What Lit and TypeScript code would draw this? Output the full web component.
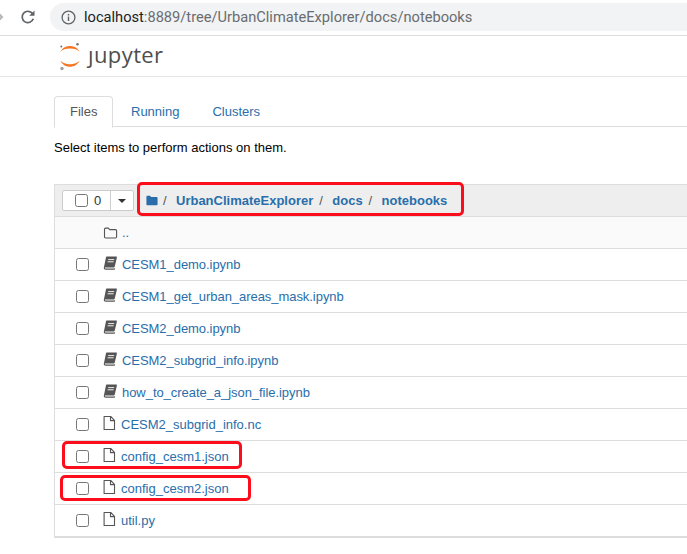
import { LitElement, css, html, svg } from "lit";
import { customElement } from "lit/decorators.js";
import { classMap } from "lit/directives/class-map.js";

type Item = { name: string; kind: "notebook" | "file" };

const ITEMS: Item[] = [
  { name: "CESM1_demo.ipynb", kind: "notebook" },
  { name: "CESM1_get_urban_areas_mask.ipynb", kind: "notebook" },
  { name: "CESM2_demo.ipynb", kind: "notebook" },
  { name: "CESM2_subgrid_info.ipynb", kind: "notebook" },
  { name: "how_to_create_a_json_file.ipynb", kind: "notebook" },
  { name: "CESM2_subgrid_info.nc", kind: "file" },
  { name: "config_cesm1.json", kind: "file" },
  { name: "config_cesm2.json", kind: "file" },
  { name: "util.py", kind: "file" }
];

const bookIcon = svg`<svg class="icon" width="14" height="16" viewBox="0 0 14 16">
  <path fill="#555" d="M3.6 1.6h9.6c.5 0 .8.4.7.9l-2.2 9.2c-.1.5-.5.8-1 .8H2.4c-.5 0-.7.5-.4.8.2.2.5.3.9.3h8.4l.9-.6-.3 1.2c-.1.4-.4.6-.8.6H2.7C1.500 14.800.6 13.900.8 12.800l.3-1.400L3 2.300c.1-.4.300-.7.600-.7z"/>
  <path stroke="#fff" stroke-width=".9" d="M5.200 4.600h6M4.600 6.800h6"/>
</svg>`;

const fileIcon = svg`<svg class="icon" width="14" height="16" viewBox="0 0 14 16">
  <path fill="none" stroke="#555" stroke-width="1.100" stroke-linejoin="round" d="M1.100 1.500h6.600l3.800 3.900v9.100H1.100zM7.500 1.700v3.900h3.900"/>
</svg>`;

const folderOpenIcon = svg`<svg class="icon" width="15" height="14" viewBox="0 0 15 14">
  <path fill="none" stroke="#555" stroke-width="1.100" stroke-linejoin="round" d="M1.500 3.300c0-.7.500-1.200 1.200-1.200h2.700l1.300 1.500h5.800c.7 0 1.100.5 1.100 1.200v6c0 .7-.4 1.200-1.100 1.200H2.700c-.7 0-1.200-.5-1.200-1.200z"/>
</svg>`;

@customElement("app-root")
export class AppRoot extends LitElement {
  static styles = css`
    :host {
      display: block;
      position: relative;
      width: 687px;
      height: 554px;
      overflow: hidden;
      background: #fff;
      font-family: "Liberation Sans", Arial, sans-serif;
      font-size: 13px;
      color: #000;
    }

    a {
      color: #296eaa;
      text-decoration: none;
    }

    .browser {
      display: flex;
      align-items: center;
      height: 36px;
      box-sizing: border-box;
      border-bottom: 1px solid #dcdcdc;
      padding-bottom: 1px;
    }

    .back {
      width: 4px;
      height: 12px;
      flex: none;
    }

    .reload {
      margin-left: 16px;
      flex: none;
    }

    .address {
      display: flex;
      align-items: center;
      flex: 1;
      height: 28px;
      margin-left: 14px;
      padding-left: 11px;
      border-radius: 14px 0 0 14px;
      background: #f1f3f4;
      font-family: Roboto, "Liberation Sans", sans-serif;
      font-size: 14.65px;
      color: #6a6c6f;
    }

    .address svg {
      flex: none;
      margin-right: 8px;
    }

    .address b {
      font-weight: 400;
      color: #202124;
    }

    .brand {
      display: flex;
      align-items: center;
      height: 41px;
      padding-left: 59px;
      box-sizing: border-box;
      border-bottom: 1px solid #e7e7e7;
    }

    .wordmark {
      margin-left: 7px;
      margin-top: -4px;
      font-family: "Open Sans", sans-serif;
      font-size: 22px;
      letter-spacing: 0.4px;
      color: #4e4e4e;
    }

    .main {
      padding: 19px 0 0 54px;
    }

    .tabs {
      display: flex;
      height: 31px;
      box-sizing: border-box;
      border-bottom: 1px solid #ddd;
    }

    .tab {
      display: flex;
      align-items: center;
      padding: 0 16px 0 17px;
      height: 31px;
      box-sizing: border-box;
      line-height: 30px;
    }

    .tab.active {
      width: 59px;
      padding: 0 15px;
      height: 32px;
      border: 1px solid #ddd;
      border-bottom-color: #fff;
      border-radius: 4px 4px 0 0;
      color: #555;
      background: #fff;
    }

    .tab.running {
      margin-left: 1px;
    }

    .hint {
      height: 57px;
      padding-top: 13px;
      box-sizing: border-box;
      line-height: 15px;
    }

    .list {
      border: 1px solid #ddd;
      border-right: 0;
      box-sizing: border-box;
    }

    .toolbar {
      display: flex;
      align-items: center;
      height: 32px;
      box-sizing: border-box;
      background: #eee;
      border-bottom: 1px solid #ddd;
      padding-left: 7px;
    }

    .select {
      display: flex;
      align-items: center;
      height: 21px;
      width: 72px;
      box-sizing: border-box;
      border: 1px solid #ccc;
      border-radius: 2px;
      background: #fff;
      flex: none;
      color: #333;
    }

    .select .check {
      margin-left: 12px;
    }

    .select .count {
      margin-left: 6px;
      width: 16px;
    }

    .select .caret {
      display: flex;
      align-items: center;
      justify-content: center;
      height: 100%;
      flex: 1;
      border-left: 1px solid #ccc;
    }

    .caret i {
      border: 4px solid transparent;
      border-top-color: #333;
      border-bottom: 0;
    }

    .crumbs {
      display: flex;
      align-items: center;
      margin-left: 12px;
      font-weight: 700;
    }

    .crumbs svg {
      margin-right: 5px;
    }

    .crumbs span {
      width: 13px;
      font-weight: 400;
      color: #555;
    }

    .crumbs a + span {
      margin-left: 6px;
    }

    .row {
      display: flex;
      align-items: center;
      height: 32px;
      box-sizing: border-box;
      border-bottom: 1px solid #ddd;
      padding-left: 21px;
    }

    .row.up {
      background: #fafafa;
      padding-left: 48px;
    }

    .row.up a {
      margin-left: 4px;
    }

    .check {
      display: block;
      width: 13px;
      height: 13px;
      box-sizing: border-box;
      border: 1px solid #767676;
      border-radius: 2.5px;
      background: #fff;
      flex: none;
    }

    .icon {
      flex: none;
    }

    .row .check + .icon {
      margin-left: 14px;
      margin-top: -3px;
    }

    .row.file a {
      margin-left: 4px;
    }

    .row.notebook a {
      margin-left: 5px;
      letter-spacing: -0.05px;
    }

    .mark {
      position: absolute;
      box-sizing: border-box;
      border: 3px solid #fb0d1c;
      border-radius: 5px;
    }

    .mark.crumb {
      left: 137px;
      top: 182px;
      width: 327px;
      height: 34px;
    }

    .mark.one {
      left: 62px;
      top: 441px;
      width: 180px;
      height: 28px;
    }

    .mark.two {
      left: 60px;
      top: 475px;
      width: 191px;
      height: 26px;
    }
  `;

  private renderLogo() {
    return html`<svg width="22" height="29" viewBox="0 0 22 29">
      <path fill="#f37726" d="M1.500 9.800C3.200 6 6.800 3.900 11 3.900s7.800 2.100 9.500 5.900C18.300 7.500 15 6.500 11 6.500S3.700 7.500 1.500 9.800z"/>
      <path fill="#f37726" d="M1.500 18.800c1.700 3.900 5.300 6 9.500 6s7.800-2.100 9.500-6c-2.200 2.300-5.500 3.400-9.500 3.400s-7.300-1.100-9.500-3.400z"/>
      <circle cx="18.500" cy="2.200" r="1.300" fill="#767677"/>
      <circle cx="2.300" cy="4.500" r=".9" fill="#616262"/>
      <circle cx="3" cy="26.500" r="1.700" fill="#9e9e9e"/>
    </svg>`;
  }

  private renderRow(item: Item) {
    return html`<div class=${classMap({ row: true, [item.kind]: true })}>
      <span class="check"></span>
      ${item.kind === "notebook" ? bookIcon : fileIcon}
      <a href="#">${item.name}</a>
    </div>`;
  }

  override render() {
    return html`
      <div class="browser">
        <svg class="back" viewBox="0 0 4 12">
          <path fill="none" stroke="#b4b6b8" stroke-width="2" d="M-3 1l5 5-5 5"/>
        </svg>
        <svg class="reload" width="16" height="16" viewBox="0 0 16 16">
          <path fill="none" stroke="#5f6368" stroke-width="1.700" d="M13.300 9.800a5.700 5.700 0 1 1-.8-5.200"/>
          <path fill="#5f6368" d="M14.500 1.500v5.300H9.200z"/>
        </svg>
        <div class="address">
          <svg width="15" height="15" viewBox="0 0 15 15">
            <circle cx="7.500" cy="7.500" r="6.400" fill="none" stroke="#5f6368" stroke-width="1.300"/>
            <path fill="#5f6368" d="M6.800 6.500h1.400v4.500H6.800zM6.800 3.900h1.400v1.500H6.800z"/>
          </svg>
          <span><b>localhost</b>:8889/tree/UrbanClimateExplorer/docs/notebooks</span>
        </div>
      </div>

      <div class="brand">
        ${this.renderLogo()}
        <span class="wordmark">ȷupyter</span>
      </div>

      <div class="main">
        <div class="tabs">
          <a class="tab active" href="#">Files</a>
          <a class="tab running" href="#">Running</a>
          <a class="tab" href="#">Clusters</a>
        </div>
        <div class="hint">Select items to perform actions on them.</div>

        <div class="list">
          <div class="toolbar">
            <div class="select">
              <span class="check"></span>
              <span class="count">0</span>
              <span class="caret"><i></i></span>
            </div>
            <div class="crumbs">
              <svg width="12" height="11" viewBox="0 0 14 12" preserveAspectRatio="none">
                <path fill="#296eaa" d="M.5 2c0-.8.500-1.300 1.200-1.300h3l1.300 1.500h6.300c.8 0 1.200.5 1.200 1.200v6.700c0 .8-.4 1.200-1.200 1.200H1.700c-.7 0-1.200-.4-1.200-1.200z"/>
              </svg>
              <span>/</span>
              <a href="#">UrbanClimateExplorer</a>
              <span>/</span>
              <a href="#">docs</a>
              <span>/</span>
              <a href="#">notebooks</a>
            </div>
          </div>
          <div class="row up">${folderOpenIcon}<a href="#">..</a></div>
          ${ITEMS.map((item) => this.renderRow(item))}
        </div>
      </div>

      <div class="mark crumb"></div>
      <div class="mark one"></div>
      <div class="mark two"></div>
    `;
  }
}
